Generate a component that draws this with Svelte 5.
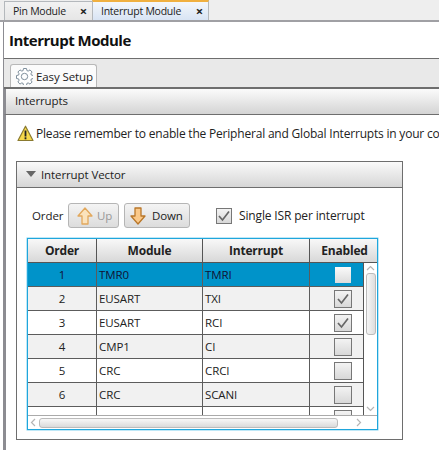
<script>
  const rows = [
    { order: 1, module: 'TMR0', interrupt: 'TMRI', on: false },
    { order: 2, module: 'EUSART', interrupt: 'TXI', on: true },
    { order: 3, module: 'EUSART', interrupt: 'RCI', on: true },
    { order: 4, module: 'CMP1', interrupt: 'CI', on: false },
    { order: 5, module: 'CRC', interrupt: 'CRCI', on: false },
    { order: 6, module: 'CRC', interrupt: 'SCANI', on: false },
    { order: 7, module: 'ADCC', interrupt: 'ADI', on: false }
  ];
</script>

{#snippet check(on)}
  <span class="check">
    {#if on}
      <svg width="14" height="12" viewBox="0 0 14 12"><path d="M2 6 L5.500 10 L12 1.500" fill="none" stroke="#666" stroke-width="1.700"/></svg>
    {/if}
  </span>
{/snippet}

<div class="page">
  <div class="tabbar">
    <div class="doc-tab">
      <span>Pin Module</span><span class="x">×</span>
    </div>
    <div class="doc-tab active">
      <span>Interrupt Module</span><span class="x">×</span>
    </div>
  </div>

  <div class="main">
    <h1>Interrupt Module</h1>

    <div class="strip">
      <div class="setup-tab">
        <svg class="gear" width="17" height="17" viewBox="0 0 17 17">
          <path d="M7 .8h3l.4 2.100 1.300.5 1.800-1.200 2.100 2.100-1.200 1.800.5 1.300 2.100.4v3l-2.100.4-.5 1.300 1.200 1.800-2.100 2.100-1.800-1.200-1.300.5-.4 2.100H7l-.4-2.100-1.300-.5-1.800 1.200-2.100-2.100 1.200-1.800-.5-1.300L0 10.800v-3l2.100-.4.5-1.300L1.400 4.300l2.100-2.100 1.800 1.200 1.300-.5z" transform="translate(.5 -.3)" fill="#fff" stroke="#7f8f9c" stroke-width="1"/>
          <circle cx="8.500" cy="8.500" r="3.200" fill="#fff" stroke="#7f8f9c"/>
        </svg>
        <span>Easy Setup</span>
      </div>
    </div>

    <div class="bar">Interrupts</div>

    <div class="content">
      <div class="notice">
        <svg class="warn" width="17" height="17" viewBox="0 0 17 17">
          <path d="M8.500 1.200 L16 15.500 H1 Z" fill="#f6d84a" stroke="#8a7a30" stroke-width="1.200" stroke-linejoin="round"/>
          <rect x="7.600" y="5.500" width="1.800" height="6" fill="#222"/>
          <rect x="7.600" y="12.300" width="1.800" height="2" fill="#222"/>
        </svg>
        <span class="notice-text">Please remember to enable the Peripheral and Global Interrupts in your code</span>
      </div>

      <section class="panel">
        <div class="panel-head">
          <svg width="10" height="8" viewBox="0 0 10 8"><path d="M0 1 H10 L5 7 Z" fill="#666"/></svg>
          <span>Interrupt Vector</span>
        </div>
        <div class="panel-body">
          <div class="controls">
            <span class="order-label">Order</span>
            <div class="btn disabled">
              <svg width="16" height="18" viewBox="0 0 16 18"><path d="M8 1 L15 9 H11 V17 H5 V9 H1 Z" fill="#fbe3bd" stroke="#e2a85c" stroke-width="1.300" stroke-linejoin="round"/></svg>
              <span>Up</span>
            </div>
            <div class="btn down">
              <svg width="16" height="18" viewBox="0 0 16 18"><path d="M8 17 L15 9 H11 V1 H5 V9 H1 Z" fill="#fbc989" stroke="#b9772a" stroke-width="1.300" stroke-linejoin="round"/></svg>
              <span>Down</span>
            </div>
            <label class="single">
              {@render check(true)}
              <span>Single ISR per interrupt</span>
            </label>
          </div>

          <div class="table">
            <div class="thead">
              <div>Order</div><div>Module</div><div>Interrupt</div><div class="last">Enabled</div>
            </div>
            <div class="tbody-wrap">
              <div class="tbody">
                {#each rows as r, i}
                  <div class="row" class:sel={i === 0} class:alt={i % 2 === 1}>
                    <div class="c center">{r.order}</div>
                    <div class="c">{r.module}</div>
                    <div class="c">{r.interrupt}</div>
                    <div class="c center chk">{@render check(r.on)}</div>
                  </div>
                {/each}
              </div>
              <div class="vscroll">
                <svg width="9" height="6" viewBox="0 0 9 6"><path d="M1 5 L4.500 1.500 L8 5" fill="none" stroke="#b5b5b5" stroke-width="1.200"/></svg>
                <div class="vthumb"></div>
                <svg class="down" width="9" height="6" viewBox="0 0 9 6"><path d="M1 1 L4.500 4.500 L8 1" fill="none" stroke="#b5b5b5" stroke-width="1.200"/></svg>
              </div>
            </div>
            <div class="hscroll">
              <svg width="6" height="9" viewBox="0 0 6 9"><path d="M5 1 L1.500 4.500 L5 8" fill="none" stroke="#b5b5b5" stroke-width="1.200"/></svg>
              <div class="hthumb"></div>
              <svg width="6" height="9" viewBox="0 0 6 9"><path d="M1 1 L4.500 4.500 L1 8" fill="none" stroke="#b5b5b5" stroke-width="1.200"/></svg>
            </div>
          </div>
        </div>
      </section>
    </div>
  </div>
</div>

<style>
  :global(body) { margin: 0; background: #fff; }
  .page {
    width: 439px; height: 450px; overflow: hidden;
    font-family: "Open Sans", "Noto Sans", sans-serif;
    font-size: 11.5px; letter-spacing: -0.1px; color: #222;
    background: #fff; box-sizing: border-box;
  }
  .tabbar {
    height: 19px; background: #eeeeee; display: flex; padding-left: 4px; padding-top: 1px;
    border-bottom: 2px solid #a0a0a4; white-space: nowrap; font-size: 10.5px; letter-spacing: -0.25px;
  }
  .doc-tab {
    width: 88px; height: 19px; box-sizing: border-box; display: flex; justify-content: space-between;
    align-items: center; padding: 0 5px 0 8px;
    background: linear-gradient(#f2f2f2, #e6e6e6);
    border: 1px solid #b4b8bc; border-bottom: 0; border-right: 0;
  }
  .doc-tab.active {
    width: 117px; background: linear-gradient(#f4f7fb, #d8e4f4);
    border-top: 2px solid #f0b040; border-right: 1px solid #b4b8bc;
    height: 20px; margin-top: -1px;
  }
  .x { font-weight: 700; font-size: 13px; line-height: 1; }
  .main {
    margin-left: 3px; border-left: 1px solid #8c8c92; height: 429px;
    display: flex; flex-direction: column;
  }
  h1 {
    margin: 0; height: 37px; box-sizing: border-box; padding: 7px 0 0 5px;
    font-size: 15px; line-height: 22px; font-weight: 700; color: #111; letter-spacing: -0.5px;
    border-bottom: 1px solid #6e6e6e;
  }
  .strip {
    height: 30px; box-sizing: border-box; padding: 5px 0 0 6px; flex: none;
    background: #e9e9e9; border-bottom: 2px solid #6e6e6e; display: flex;
  }
  .setup-tab {
    width: 87px; box-sizing: border-box; display: flex; align-items: center; gap: 3px;
    padding-left: 5px; background: #fbfbfb; border: 1px solid #b8b8b8; border-bottom: 0;
    border-radius: 3px 3px 0 0;
  }
  .gear { flex: none; }
  .bar {
    height: 26px; box-sizing: border-box; padding: 3px 0 0 9px; line-height: 18px; flex: none;
    background: linear-gradient(#fbfbfb, #d4d4d4); border-bottom: 1px solid #6e6e6e;
    border-left: 2px solid #8c8c92;
  }
  .content {
    flex: 1; background: #fff; padding: 10px 0 0 10px; box-sizing: border-box; min-height: 0;
    border-left: 2px solid #8c8c92;
  }
  .notice { display: flex; align-items: center; gap: 2px; height: 17px; white-space: nowrap; overflow: hidden; margin-left: 1px; }
  .warn { flex: none; }
  .notice-text { font-size: 12px; letter-spacing: -0.2px; }
  .panel {
    margin-top: 19px; width: 387px; height: 279px; box-sizing: border-box;
    border: 1px solid #6e6e6e; display: flex; flex-direction: column;
  }
  .panel-head {
    height: 26px; box-sizing: border-box; display: flex; align-items: center; gap: 5px; padding: 0 0 1px 9px;
    background: linear-gradient(#fafafa, #d6d6d6); border-bottom: 1px solid #6e6e6e; flex: none;
  }
  .panel-body { padding: 15px 0 0 10px; }
  .controls { display: flex; align-items: center; height: 25px; }
  .order-label { width: 30px; padding-left: 5px; margin-right: 6px; }
  .btn {
    height: 25px; box-sizing: border-box; display: flex; align-items: center; gap: 4px; padding: 0 0 0 8px;
    border: 1px solid #b5b5b5; border-radius: 3px; background: linear-gradient(#f4f4f4, #dcdcdc); margin-right: 5px;
    flex: none;
  }
  .btn svg { flex: none; }
  .btn.disabled { color: #999; width: 51px; }
  .btn.down { width: 66px; gap: 6px; padding-left: 5px; }
  .single { display: flex; align-items: center; gap: 7px; margin-left: 21px; font-size: 12px; letter-spacing: -0.15px; }
  .check {
    width: 16px; height: 16px; box-sizing: border-box; display: inline-flex; align-items: center; justify-content: center;
    border: 1px solid #777; background: linear-gradient(#f3f3f3, #d8d8d8); flex: none;
  }
  .table {
    margin-top: 10px; width: 351px; height: 192px; box-sizing: border-box;
    border: 1px solid #1fa6dc; box-shadow: 0 0 0 .5px #7fd0ee; display: flex; flex-direction: column;
  }
  .thead {
    height: 24px; flex: none; display: grid; grid-template-columns: 69px 106px 107px 1fr;
    background: linear-gradient(#f8f8f8, #d8d8d8); font-weight: 700; color: #222; border-bottom: 1px solid #555;
    box-sizing: border-box; font-size: 12px; letter-spacing: -0.2px;
  }
  .thead div { display: flex; align-items: center; justify-content: center; border-right: 1px solid #555; }
  .thead .last { border-right: 0; padding-left: 2px; }
  .tbody-wrap { height: 152px; display: flex; overflow: hidden; flex: none; }
  .tbody { width: 336px; flex: none; overflow: hidden; border-right: 1px solid #555; box-sizing: border-box; }
  .row {
    display: grid; grid-template-columns: 69px 106px 107px 1fr; height: 24px; box-sizing: border-box;
    border-bottom: 1px solid #5c5c5c; background: #fff;
  }
  .row.alt { background: #f1f1f1; }
  .row.sel { background: #0093c9; color: #113; }
  .c { display: flex; align-items: center; padding-left: 2px; border-right: 1px solid #5c5c5c; overflow: hidden; white-space: nowrap; }
  .c.center { justify-content: center; padding-left: 0; }
  .c.chk { border-right: 0; justify-content: flex-start; padding-left: 24px; }
  .row .check { width: 18px; height: 18px; }
  .row.sel .check { border-color: #0093c9; background: linear-gradient(#fafafa, #dcdcdc); }
  .vscroll { flex: 1; display: flex; flex-direction: column; align-items: center; padding-top: 2px; background: #fff; }
  .vthumb {
    width: 10px; height: 62px; margin-top: 2px; box-sizing: border-box; border: 1px solid #bbb; border-radius: 3px;
    background: linear-gradient(90deg, #f6f6f6, #dedede);
  }
  .vscroll .down { margin-top: auto; margin-bottom: 3px; }
  .hscroll { flex: 1; display: flex; align-items: center; padding: 0 0 0 2px; background: #fff; border-top: 1px solid #aaa; }
  .hthumb {
    width: 299px; height: 10px; margin: 0 18px 0 3px; box-sizing: border-box; border: 1px solid #bbb; border-radius: 3px;
    background: linear-gradient(#f8f8f8, #dadada);
  }
</style>
